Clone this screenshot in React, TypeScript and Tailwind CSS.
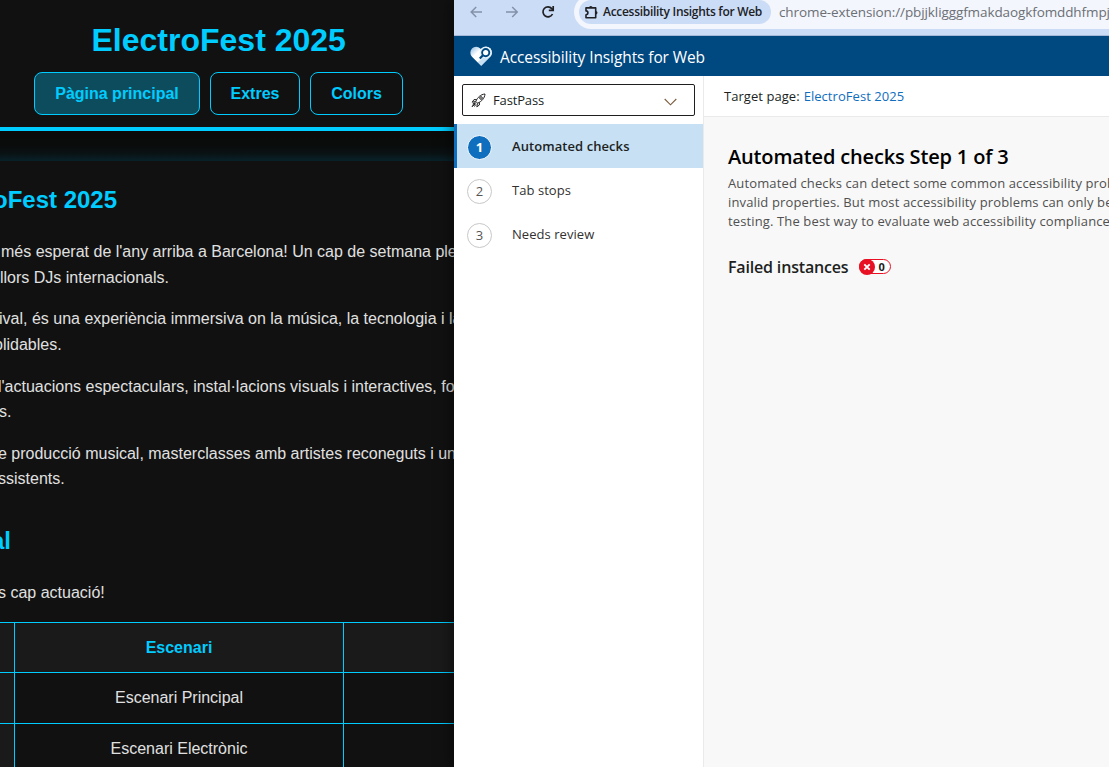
import React from "react";

const uiFont = "font-['Open_Sans','Noto_Sans',sans-serif]";

function NavButton({ label, cls }: { label: string; cls: string }) {
  return (
    <a className={`flex h-[43px] items-center justify-center rounded-lg border border-[#00ccff] font-bold text-[#00ccff] ${cls}`}>
      {label}
    </a>
  );
}

function Line({ cls = "", children }: { cls?: string; children: React.ReactNode }) {
  return <span className={`block whitespace-nowrap ${cls}`}>{children}</span>;
}

function FestivalPage() {
  return (
    <div className="h-[767px] w-[454px] shrink-0 overflow-hidden bg-[#111] font-['Liberation_Sans',Arial,sans-serif] text-base leading-[25.6px] text-[#e0e0e0]">
      <header className="h-[131px] border-b-4 border-[#00ccff] pt-[15px]">
        <h1 className="ml-[91.5px] h-[51px] whitespace-nowrap text-[32px] font-bold leading-[51.2px] text-[#00ccff]">ElectroFest 2025</h1>
        <nav className="ml-[34px] mt-[6px] flex gap-[10px]">
          <NavButton label="Pàgina principal" cls="w-[166px] bg-[#0d4c5c]" />
          <NavButton label="Extres" cls="w-[90px]" />
          <NavButton label="Colors" cls="w-[93px]" />
        </nav>
      </header>
      <div className="h-[30px] bg-[linear-gradient(to_bottom,#0a0a0a_0%,#0a0b0b_45%,#0a1214_75%,#08222a_100%)]" />
      <main className="pt-[20px]">
        <h2 className="-ml-[7px] whitespace-nowrap text-2xl font-bold leading-[38.4px] text-[#00ccff]">oFest 2025</h2>
        <div className="mt-[19.8px] flex flex-col gap-4">
          <p>
            <Line cls="ml-px">més esperat de l'any arriba a Barcelona! Un cap de setmana ple de</Line>
            <Line>llors DJs internacionals.</Line>
          </p>
          <p>
            <Line cls="-ml-px">ival, és una experiència immersiva on la música, la tecnologia i la</Line>
            <Line cls="-ml-[6px]">olidables.</Line>
          </p>
          <p>
            <Line cls="-ml-[2px]">l'actuacions espectaculars, instal·lacions visuals i interactives, food</Line>
            <Line cls="-ml-px">s.</Line>
          </p>
          <p>
            <Line cls="-ml-[2px]">e producció musical, masterclasses amb artistes reconeguts i un</Line>
            <Line cls="-ml-[2px]">ssistents.</Line>
          </p>
        </div>
        <h2 className="-ml-[9px] mt-[30.2px] text-2xl font-bold leading-[38.4px] text-[#00ccff]">al</h2>
        <p className="-ml-[2px] mt-[19px]">s cap actuació!</p>
        <div className="mt-[17px] grid grid-cols-[15px_329px_110px] grid-rows-[50px_51px_51px] border-t border-[#00ccff] text-center [&>*]:flex [&>*]:items-center [&>*]:justify-center [&>*]:border-b [&>*]:border-r [&>*]:border-[#00ccff]">
          <div className="bg-[#1a1a1a]" />
          <div className="bg-[#1a1a1a] font-bold text-[#00ccff]">Escenari</div>
          <div className="border-r-0! bg-[#1a1a1a]" />
          <div className="bg-[#1a1a1a]" />
          <div>Escenari Principal</div>
          <div className="border-r-0!" />
          <div className="bg-[#1a1a1a]" />
          <div>Escenari Electrònic</div>
          <div className="border-r-0!" />
        </div>
      </main>
    </div>
  );
}

function BrowserBar() {
  return (
    <div className="flex h-[36px] items-start border-b border-[#a5b8d8] bg-[#cbdcf7]">
      <svg className="ml-[16px] mt-[6px] shrink-0" width="13" height="12" viewBox="0 0 13 12" fill="none" stroke="#8491a8" strokeWidth="1.5">
        <path d="M12 6H1.2M6.2 1 1.2 6l5 5" />
      </svg>
      <svg className="ml-[23px] mt-[6px] shrink-0" width="13" height="12" viewBox="0 0 13 12" fill="none" stroke="#8491a8" strokeWidth="1.5">
        <path d="M0 6h11.2M6.2 1l5 5-5 5" />
      </svg>
      <svg className="ml-[22px] mt-[5px] shrink-0" width="14" height="14" viewBox="0 0 14 14" fill="none" stroke="#202124" strokeWidth="1.7">
        <path d="M11.5 9A5 5 0 1 1 10.8 3.6L12 5" />
        <path d="M12.2 1v4.4H7.8" />
      </svg>
      <div className="-mt-[5px] ml-[19px] flex h-[34px] flex-1 items-start overflow-hidden rounded-l-full bg-[#f3f6fc] pl-[5px] pt-[5px]">
        <div className="flex h-[24px] w-[192px] shrink-0 items-center rounded-full bg-[#cbdcf7] pl-[6px]">
          <svg className="shrink-0" width="14" height="14" viewBox="0 0 14 14" fill="none" stroke="#202124" strokeWidth="1.6" strokeLinejoin="round">
            <path d="M1 2.9H10.7V12.7H1V9.7A1.9 1.9 0 0 0 1 5.9Z" />
            <path d="M4 2.9A1.8 1.8 0 0 1 7.6 2.9ZM10.7 6A1.8 1.8 0 0 1 10.7 9.6Z" fill="#202124" stroke="none" />
          </svg>
          <span className="ml-[4px] whitespace-nowrap text-[12px] font-semibold tracking-[-0.29px] text-[#202124]">Accessibility Insights for Web</span>
        </div>
        <span className="ml-[8px] whitespace-nowrap text-[13.5px] leading-[24px] tracking-[-0.1px] text-[#6b6f76]">chrome-extension://pbjjkligggfmakdaogkfomddhfmpj</span>
      </div>
    </div>
  );
}

function Heart() {
  return (
    <svg className="shrink-0" width="23" height="21" viewBox="0 0 23 21">
      <defs>
        <linearGradient id="heart" x1="0" y1="0" x2="1" y2="1">
          <stop offset="0.12" stopColor="#b5d3ec" />
          <stop offset="0.32" stopColor="#ffffff" />
          <stop offset="0.55" stopColor="#ffffff" />
          <stop offset="0.6" stopColor="#c7e0f4" />
        </linearGradient>
      </defs>
      <path d="M11.2 20 2 10.8A5.9 5.9 0 0 1 2 2.6 5.7 5.7 0 0 1 10.2 2.6L11.2 3.5 12.2 2.6A5.7 5.7 0 0 1 20.4 2.6 5.9 5.9 0 0 1 20.4 10.8Z" fill="url(#heart)" />
      <circle cx="15.7" cy="6.6" r="6" fill="#e6f2fb" />
      <circle cx="15.7" cy="6.6" r="3.6" fill="#fff" stroke="#004880" strokeWidth="1.9" />
      <path d="M13 9.3 9.8 12.5" stroke="#004880" strokeWidth="2.3" />
    </svg>
  );
}

function Step({ n, label, active }: { n: number; label: string; active?: boolean }) {
  return (
    <div className={active ? "flex h-11 items-center border-l-[3px] border-[#106ebe] bg-[#c7e0f4] pl-[10px]" : "flex h-11 items-center pl-[13px]"}>
      <span className={active
        ? "mt-[3px] flex size-[25px] items-center justify-center rounded-full border border-white bg-[#106ebe] pt-px text-[13px] font-bold text-white"
        : "mt-[3px] flex size-[25px] items-center justify-center rounded-full border border-[#c8c8c8] bg-white pt-px text-[13px] text-[#555]"}>{n}</span>
      <span className={active ? "ml-5 pt-[2px] text-[13px] font-semibold tracking-[0.07px] text-[#201f1e]" : "ml-5 pt-[2px] text-[13px] tracking-[0.05px] text-[#323130]"}>{label}</span>
    </div>
  );
}

function InsightsWindow() {
  return (
    <div className={`flex h-[767px] w-[655px] shrink-0 flex-col overflow-hidden bg-white shadow-[0_0_14px_2px_rgba(0,0,0,0.5)] ${uiFont}`}>
      <BrowserBar />
      <header className="flex h-10 shrink-0 items-center gap-[7px] bg-[#004880] pl-[16px] text-white">
        <Heart />
        <span className="mt-[3px] whitespace-nowrap text-[15.5px] tracking-[-0.1px]">Accessibility Insights for Web</span>
      </header>
      <div className="flex min-h-0 flex-1">
        <aside className="w-[250px] shrink-0 border-r border-[#eaeaea] bg-white">
          <div className="ml-[8px] mt-[8px] flex h-[32px] w-[233px] items-center rounded-[2px] border border-[#201f1e] pl-[8px] pr-[17px] text-[13px] text-[#201f1e]">
            <svg width="15" height="15" viewBox="0 0 15 15" fill="none" stroke="#222" strokeWidth="1">
              <path d="M4.8 8.4C6.5 4.5 9.5 1.4 14 1c-.4 4.5-3.5 7.5-7.4 9.2ZM5.6 6.6H3L1.2 9.2l3.5-.7M8.4 9.4V12l-2.6 1.8.7-3.5M4.4 9.5 1 13.7l3.6-3.2M3.6 9.6 1.6 11M5.2 11.4 3 13.5" />
              <circle cx="10" cy="5" r="1.3" />
            </svg>
            <span className="ml-[7px] flex-1 pt-[2px] tracking-[-0.15px]">FastPass</span>
            <svg className="mt-[3px]" width="13" height="8" viewBox="0 0 13 8" fill="none" stroke="#7a5c3c" strokeWidth="1.1"><path d="m.7 1 5.8 5.8L12.3 1" /></svg>
          </div>
          <div className="mt-[8px]">
            <Step n={1} label="Automated checks" active />
            <Step n={2} label="Tab stops" />
            <Step n={3} label="Needs review" />
          </div>
        </aside>
        <section className="min-w-0 flex-1 overflow-hidden bg-[#f8f8f8]">
          <div className="flex h-[41px] items-center whitespace-nowrap border-b border-[#eaeaea] bg-white pl-[20px] pt-[2px] text-[13px] tracking-[0.05px] text-[#201f1e]">
            <span>Target page:</span>
            <a className="ml-1 text-[#106ebe]">ElectroFest 2025</a>
          </div>
          <div className="whitespace-nowrap pl-6 pt-[25px]">
            <h1 className="text-[20px] font-semibold leading-[30px] tracking-[-0.16px] text-black">Automated checks Step 1 of 3</h1>
            <p className="mt-[2px] text-[13px] leading-[19px] tracking-[0.13px] text-[#505050]">
              <Line>Automated checks can detect some common accessibility problems</Line>
              <Line>invalid properties. But most accessibility problems can only be</Line>
              <Line>testing. The best way to evaluate web accessibility compliance</Line>
            </p>
            <div className="mt-[24px] flex h-[24px] items-center">
              <h2 className="text-[16px] font-semibold tracking-[-0.17px] text-[#201f1e]">Failed instances</h2>
              <div className="-mt-px ml-[11px] flex h-[15px] w-[32px] items-center rounded-full border border-[#e81123] bg-white">
                <svg className="-ml-px shrink-0" width="16" height="16" viewBox="0 0 16 16">
                  <circle cx="8" cy="8" r="8" fill="#e81123" />
                  <path d="m5.3 5.3 5.4 5.4m0-5.4-5.4 5.4" stroke="#fff" strokeWidth="1.9" />
                </svg>
                <span className="-mt-px ml-[3px] text-[11px] font-bold leading-none text-[#201f1e]">0</span>
              </div>
            </div>
          </div>
        </section>
      </div>
    </div>
  );
}

export default function App() {
  return (
    <div className="flex h-[767px] w-[1109px] overflow-hidden">
      <FestivalPage />
      <InsightsWindow />
    </div>
  );
}
